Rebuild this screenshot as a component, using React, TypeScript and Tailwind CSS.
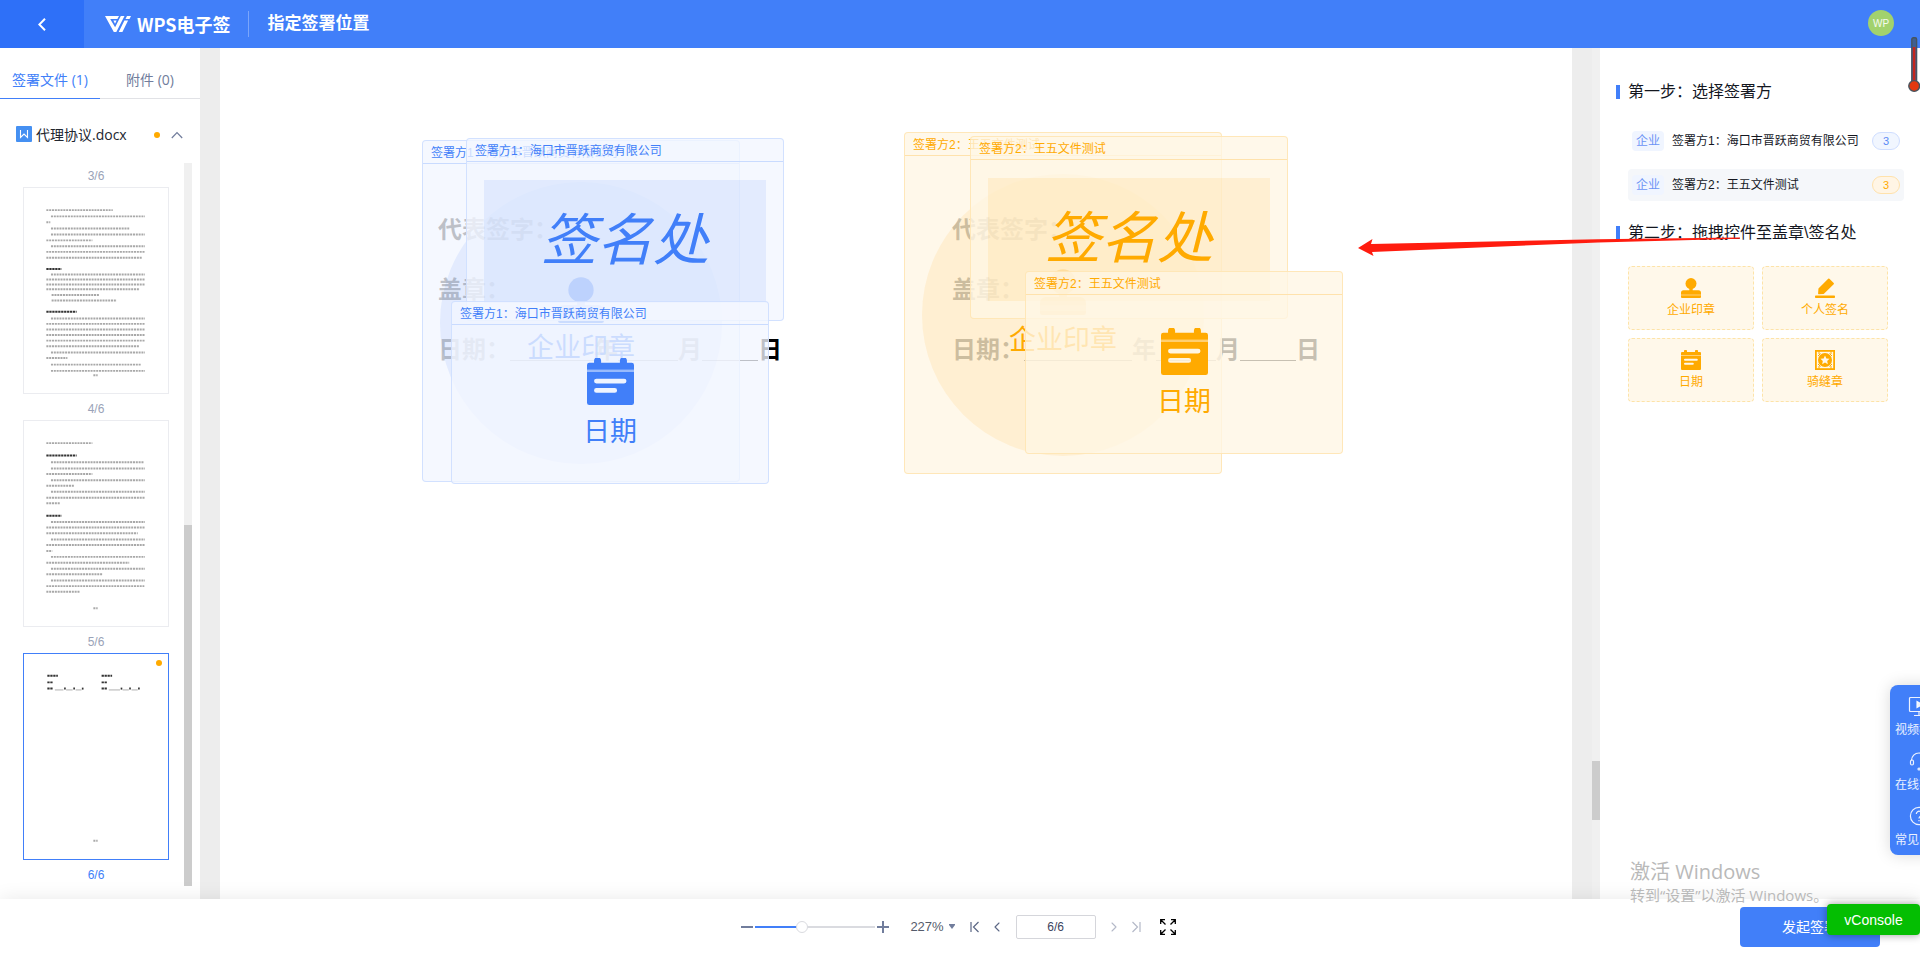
import type { ReactNode } from "react";
import { ChevronLeft, ChevronRight } from "lucide-react";

type Line = [number, number, number, boolean?];
type Tone = "blue" | "orange";

const HUMAN = "font-['Open_Sans','Noto_Sans_CJK_SC',sans-serif]";

const PAGE_THREE: Line[] = [
  [68, 270, 66], [82, 368, 85], [68, 80, 103], [82, 320, 122], [82, 368, 140], [68, 208, 158],
  [82, 368, 176], [68, 368, 193], [68, 360, 211], [68, 114, 245, true], [82, 368, 262], [68, 368, 277],
  [68, 368, 292], [68, 352, 307], [84, 230, 324], [84, 282, 341], [68, 160, 375, true], [82, 368, 396],
  [68, 368, 412], [68, 368, 429], [68, 368, 446], [68, 368, 463], [68, 350, 480], [82, 368, 499],
  [68, 132, 516], [82, 356, 536], [82, 368, 555], [211, 224, 568],
];
const PAGE_FOUR: Line[] = [
  [68, 208, 66], [68, 160, 104, true], [82, 364, 124], [82, 368, 143], [68, 208, 160], [82, 368, 179],
  [68, 154, 196], [82, 368, 214], [68, 368, 232], [68, 110, 249], [68, 114, 287, true], [82, 368, 306],
  [68, 368, 323], [68, 346, 340], [82, 368, 359], [68, 368, 376], [68, 86, 394], [82, 368, 412],
  [68, 320, 430], [82, 368, 448], [68, 238, 465], [82, 368, 484], [68, 366, 501], [68, 170, 518],
  [211, 224, 568],
];
const PAGE_FIVE: Line[] = [
  [71, 103, 65, true], [71, 88, 85, true], [71, 88, 104, true], [122, 127, 104, true], [150, 155, 104, true], [176, 181, 104, true],
  [236, 268, 65, true], [236, 253, 85, true], [236, 253, 104, true], [294, 299, 104, true], [320, 325, 104, true], [347, 352, 104, true],
  [211, 224, 567],
];
const RULES: Line[] = [
  [94, 120, 108], [128, 148, 108], [157, 175, 108], [258, 292, 108], [300, 319, 108], [327, 346, 108],
];

function PageSketch({ lines, rules = [] }: { lines: Line[]; rules?: Line[] }) {
  return (
    <svg viewBox="0 0 438 621" className="block h-full w-full" aria-hidden="true">
      {lines.map(([a, b, y, bold], i) => (
        <line key={i} x1={a} x2={b} y1={y} y2={y} stroke={bold ? "#333" : "#a8a8a8"} strokeWidth="6" strokeDasharray={bold ? "7 2" : "6.2 2.4"} />
      ))}
      {rules.map(([a, b, y], i) => (
        <line key={i} x1={a} x2={b} y1={y} y2={y} stroke="#888" strokeWidth="2" />
      ))}
    </svg>
  );
}

function StampIcon({ className }: { className: string }) {
  return (
    <svg viewBox="0 0 20 20" className={className} fill="currentColor" aria-hidden="true">
      <circle cx="10" cy="5.6" r="5.5" />
      <path d="M8.3 10h3.4v2.200h5.800a2.500 2.500 0 0 1 2.500 2.500V16H0v-1.300a2.500 2.500 0 0 1 2.500-2.500h5.800z" />
      <path d="M0 16h20v2H0z" opacity=".75" />
      <path d="M0 18h20v1a1 1 0 0 1-1 1H1a1 1 0 0 1-1-1z" />
    </svg>
  );
}

function DateIcon({ className }: { className: string }) {
  return (
    <svg viewBox="0 0 20 20" className={className} fill="currentColor" aria-hidden="true">
      <path d="M1 2h2V1.200a1.200 1.200 0 0 1 3 0V2h8V1.200a1.200 1.200 0 0 1 3 0V2h2a1 1 0 0 1 1 1v2H0V3a1 1 0 0 1 1-1z" />
      <path d="M0 5h20v1H0z" opacity=".5" />
      <path fillRule="evenodd" d="M0 6h20v13a1 1 0 0 1-1 1H1a1 1 0 0 1-1-1zM4 8.800a1 1 0 0 0 0 2h11.800a1 1 0 0 0 0-2zM4 12.800a1 1 0 0 0 0 2h7.800a1 1 0 0 0 0-2z" />
    </svg>
  );
}

function PenIcon({ className }: { className: string }) {
  return (
    <svg viewBox="0 0 20 20" className={className} fill="currentColor" aria-hidden="true">
      <path d="M13.200.8a.9.9 0 0 1 1.200 0l4.300 4.300a.9.9 0 0 1 0 1.200L9.200 15.600a1 1 0 0 1-.6.300l-4.700.3a.7.7 0 0 1-.8-.8l.3-4.400a1 1 0 0 1 .3-.7z" />
      <rect y="17.600" width="20" height="2.400" rx=".8" />
    </svg>
  );
}

function SeamIcon({ className }: { className: string }) {
  return (
    <svg viewBox="0 0 20 20" className={className} aria-hidden="true">
      <rect x=".9" y=".9" width="18.200" height="18.200" fill="none" stroke="currentColor" strokeWidth="1.800" />
      <path d="M4 1v3M4 16v3M16 1v3M16 16v3M5.500 3.500L3 6M14.500 3.500L17 6M5.500 16.500L3 14M14.500 16.500L17 14" stroke="currentColor" strokeWidth="1" />
      <circle cx="10" cy="10" r="7" fill="currentColor" />
      <path d="M10 5.500l1.350 2.900 3.150.4-2.300 2.200.6 3.150L10 12.600l-2.800 1.550.6-3.150-2.300-2.200 3.150-.4z" fill="#fff8ea" />
    </svg>
  );
}

function Card({ tone, title, place, children }: { tone: Tone; title: string; place: string; children: ReactNode }) {
  const blue = tone === "blue";
  return (
    <section
      className={`absolute flex w-[318px] flex-col rounded-[4px] border ${place} ${
        blue ? "border-[#c9dbff]/80 bg-[#f2f6ff]/78 text-[#417ff9]" : "border-[#ffe2ac]/80 bg-[#fff6e4]/78 text-[#ffaa00]"
      }`}
    >
      <h3 className={`h-[23px] border-b pl-2 text-xs leading-6 ${blue ? "border-[#c9dbff]" : "border-[#ffe2ac]"}`}>{title}</h3>
      <div className="flex flex-1 flex-col items-center justify-center">{children}</div>
    </section>
  );
}

function Signature({ tone }: { tone: Tone }) {
  return (
    <div
      className={`flex h-[123px] w-[282px] items-center justify-center text-[56px] leading-none italic ${
        tone === "blue" ? "bg-[#417ff9]/10" : "bg-[#ffaa00]/10"
      }`}
    >
      签名处
    </div>
  );
}

function Seal({ tone }: { tone: Tone }) {
  return (
    <div className={`flex size-[282px] flex-col items-center justify-center rounded-full ${tone === "blue" ? "bg-[#417ff9]/10" : "bg-[#ffaa00]/10"}`}>
      <StampIcon className="size-[46px]" />
      <span className="mt-1 text-[27px] leading-[42px]">企业印章</span>
    </div>
  );
}

function DateMark() {
  return (
    <>
      <DateIcon className="size-[47px]" />
      <span className="mt-2 text-[27px] leading-[38px]">日期</span>
    </>
  );
}

function SignColumn({ yearGap }: { yearGap: string }) {
  return (
    <div className="w-[514px] text-2xl leading-[60px] font-bold text-black">
      <p>代表签字：</p>
      <p>盖章：</p>
      <p className="flex items-center">
        日期：
        <i className={`mt-5 h-px bg-black ${yearGap}`} />年<i className="mt-5 h-px w-[60px] bg-black" />月
        <i className="mt-5 h-px w-[56px] bg-black" />日
      </p>
    </div>
  );
}

function Thumb({ label, active, children }: { label: string; active?: boolean; children: ReactNode }) {
  return (
    <>
      <button aria-label={`第${label[0]}页预览`} className={`relative block h-[207px] w-full border bg-white ${active ? "border-[#417ff9]" : "border-[#ebecf0]"}`}>
        {children}
        {active && <span className="absolute top-[6px] right-[6px] size-[6px] rounded-full bg-[#ffaa00]" />}
      </button>
      <p className={`h-[26px] text-center text-xs leading-[30px] ${active ? "text-[#417ff9]" : "text-[#9aa3b8]"}`}>{label}</p>
    </>
  );
}

function StepTitle({ children }: { children: string }) {
  return (
    <h2 className="flex items-center gap-2 text-base leading-6 text-[#14171f]">
      <span className="h-[14px] w-1 bg-[#417ff9]" />
      {children}
    </h2>
  );
}

const SIGNERS = [
  { name: "签署方1：海口市晋跃商贸有限公司", row: "", badge: "border-[#cfdeff] bg-[#f1f6ff] text-[#5a8af5]" },
  { name: "签署方2：王五文件测试", row: "bg-[#f5f7fa]", badge: "border-[#ffe2ac] bg-[#fff5e5] text-[#ffaa00]" },
];

const WIDGETS = [
  { label: "企业印章", Icon: StampIcon },
  { label: "个人签名", Icon: PenIcon },
  { label: "日期", Icon: DateIcon },
  { label: "骑缝章", Icon: SeamIcon },
];

export default function App() {
  return (
    <div className="relative flex h-screen flex-col overflow-hidden bg-white font-['Liberation_Sans','Noto_Sans_CJK_SC',sans-serif]">
      <header className="flex h-12 shrink-0 items-center bg-[#417ff9] text-white">
        <button aria-label="返回" className="flex h-full w-[84px] items-center justify-center bg-[#2e70f8]">
          <svg viewBox="0 0 8 13" className="h-[13px] w-2" fill="none" stroke="currentColor" strokeWidth="2" aria-hidden="true">
            <path d="M7 .8L1.300 6.500 7 12.200" />
          </svg>
        </button>
        <svg viewBox="0 0 26 16" className="ml-[21px] h-4 w-[26px]" fill="currentColor" aria-hidden="true">
          <path d="M0 0h14l-1.600 3H5.200l4.900 8.200L15.800 0h3.700l-8.200 16H8.800z" />
          <path d="M8.400 4.500h3.200L10 7.700z" />
          <path d="M19.400 4.500h3.700L17.400 16h-3.700zM22 0h4l-1.500 3h-4z" />
        </svg>
        <span className="ml-[6px] font-['Noto_Sans_CJK_SC',sans-serif] text-lg font-bold">WPS电子签</span>
        <span className="ml-[17px] h-[26px] w-px bg-white/30" />
        <h1 className="ml-[19px] text-[17px] font-bold">指定签署位置</h1>
        <span className="mr-[26px] mb-[2px] ml-auto flex size-[26px] items-center justify-center rounded-full bg-[#a2d26d] text-[10px] text-white/90">WP</span>
      </header>

      <div className="flex min-h-0 flex-1">
        <aside className="flex w-[200px] shrink-0 flex-col">
          <nav className={`flex h-[51px] shrink-0 pt-[13px] text-sm ${HUMAN}`}>
            <button className="flex-1 border-b border-[#417ff9] whitespace-nowrap text-[#417ff9]">签署文件 (1)</button>
            <button className="flex-1 border-b border-[#e1e2e6] whitespace-nowrap text-[#717d9c]">附件 (0)</button>
          </nav>
          <div className={`flex h-[62px] shrink-0 items-center pt-[10px] pr-[17px] pl-4 text-sm text-[#22262f] ${HUMAN}`}>
            <svg viewBox="0 0 16 16" className="mb-[2px] size-4" aria-hidden="true">
              <rect width="16" height="16" rx="1" fill="#4590f2" />
              <path d="M4.500 4V11.500L8 8 11.500 11.500V4" fill="none" stroke="#fff" strokeWidth="1.100" />
            </svg>
            <span className="ml-1">代理协议.docx</span>
            <span className="mr-[11px] ml-auto size-[6px] rounded-full bg-[#ffaa00]" />
            <svg viewBox="0 0 12 8" className="h-2 w-3" fill="none" stroke="#717d9c" strokeWidth="1.200" aria-hidden="true">
              <path d="M.8 7L6 1.500 11.200 7" />
            </svg>
          </div>
          <div className="flex min-h-0 flex-1">
            <div className="min-w-0 flex-1 overflow-hidden pr-[15px] pl-[23px]">
              <p className="h-[26px] text-center text-xs leading-[30px] text-[#9aa3b8]">3/6</p>
              <Thumb label="4/6"><PageSketch lines={PAGE_THREE} /></Thumb>
              <Thumb label="5/6"><PageSketch lines={PAGE_FOUR} /></Thumb>
              <Thumb label="6/6" active><PageSketch lines={PAGE_FIVE} rules={RULES} /></Thumb>
            </div>
            <div className="mt-[2px] mr-2 mb-[13px] flex w-2 flex-col justify-end bg-[#f0f0f0]">
              <span className="h-1/2 bg-[#ccc]" />
            </div>
          </div>
        </aside>

        <main className="flex min-w-0 flex-1 bg-[#ededed] pl-5">
          <div className="relative min-w-0 flex-1 overflow-hidden bg-white">
            <div className="flex pt-[152px] pl-[218px]">
              <SignColumn yearGap="w-[84px]" />
              <SignColumn yearGap="w-[108px]" />
            </div>
            <Card tone="blue" title="签署方1：海口市晋跃商贸有限公司" place="left-[202px] top-[92px] h-[342px]"><Seal tone="blue" /></Card>
            <Card tone="blue" title="签署方1：海口市晋跃商贸有限公司" place="left-[246px] top-[90px] h-[183px]"><Signature tone="blue" /></Card>
            <Card tone="blue" title="签署方1：海口市晋跃商贸有限公司" place="left-[231px] top-[253px] h-[183px]"><DateMark /></Card>
            <Card tone="orange" title="签署方2：王五文件测试" place="left-[684px] top-[84px] h-[342px]"><Seal tone="orange" /></Card>
            <Card tone="orange" title="签署方2：王五文件测试" place="left-[750px] top-[88px] h-[183px]"><Signature tone="orange" /></Card>
            <Card tone="orange" title="签署方2：王五文件测试" place="left-[805px] top-[223px] h-[183px]"><DateMark /></Card>
          </div>
          <div className="ml-5 flex w-2 flex-col justify-end bg-[#f0f0f0] pb-[79px]">
            <span className="h-[59px] bg-[#ccc]" />
          </div>
        </main>

        <aside className="w-[320px] shrink-0 pt-8 pl-4">
          <StepTitle>第一步：选择签署方</StepTitle>
          <ul className="mt-[21px] ml-3 flex w-[276px] flex-col gap-3">
            {SIGNERS.map((s) => (
              <li key={s.name} className={`flex h-8 items-center rounded-[4px] pr-1 pl-1 text-xs text-[#14171f] ${s.row}`}>
                <span className="flex h-5 w-8 items-center justify-center rounded-[4px] bg-[#f0f5ff] text-[#6c93f5]">企业</span>
                <span className="ml-2">{s.name}</span>
                <span className={`ml-auto flex h-[18px] w-7 items-center justify-center rounded-full border text-[11px] ${s.badge}`}>3</span>
              </li>
            ))}
          </ul>
          <div className="mt-5">
            <StepTitle>{"第二步：拖拽控件至盖章\\签名处"}</StepTitle>
          </div>
          <div className="mt-[21px] ml-3 grid w-[260px] grid-cols-2 gap-2">
            {WIDGETS.map(({ label, Icon }) => (
              <button key={label} className="flex h-16 flex-col items-center justify-center rounded-[4px] border border-dashed border-[#fde3a8] bg-[#fff8ea] text-xs text-[#ffaa00]">
                <Icon className="mt-[2px] size-5" />
                <span className="mt-[2px] leading-5">{label}</span>
              </button>
            ))}
          </div>
        </aside>
      </div>

      <footer className="relative grid h-[55px] shrink-0 grid-cols-[1fr_auto_1fr] items-center bg-white shadow-[0_0_20px_rgba(0,0,0,0.09)]">
        <div className="col-start-2 flex items-center text-[#5b6785]">
          <button aria-label="缩小" className="h-[2px] w-3 bg-[#717d9c]" />
          <input
            type="range"
            aria-label="缩放"
            defaultValue={38}
            className="mx-[2px] h-3 w-[120px] appearance-none bg-[linear-gradient(to_right,#417ff9_38%,#dadbe0_38%)] bg-[length:100%_2px] bg-center bg-no-repeat [&::-webkit-slider-thumb]:size-3 [&::-webkit-slider-thumb]:appearance-none [&::-webkit-slider-thumb]:rounded-full [&::-webkit-slider-thumb]:border [&::-webkit-slider-thumb]:border-[#dadbe0] [&::-webkit-slider-thumb]:bg-white"
          />
          <button aria-label="放大">
            <svg viewBox="0 0 12 12" className="size-3" stroke="#717d9c" strokeWidth="2" aria-hidden="true">
              <path d="M0 6h12M6 0v12" />
            </svg>
          </button>
          <button className="ml-[21px] flex items-center text-[13px] text-[#555b6b]">
            227%
            <svg viewBox="0 0 6 5" className="ml-[5px] h-[5px] w-[6px]" fill="#717d9c" aria-hidden="true">
              <path d="M0 0h6v1L3 5 0 1z" />
            </svg>
          </button>
          <button aria-label="首页" className="ml-[15px]">
            <svg viewBox="0 0 9 12" className="h-3 w-[9px]" fill="none" stroke="currentColor" strokeWidth="1.200" aria-hidden="true">
              <path d="M1 1v10M8.500 1L3.500 6l5 5" />
            </svg>
          </button>
          <button aria-label="上一页" className="ml-[14px]"><ChevronLeft className="-mx-1 size-4" strokeWidth={1.6} /></button>
          <input aria-label="页码" defaultValue="6/6" className="ml-[15px] h-6 w-20 rounded-[2px] border border-[#d5d6db] text-center text-xs text-[#3c4460]" />
          <button aria-label="下一页" className="ml-[14px] text-[#b4b9c8]"><ChevronRight className="-mx-1 size-4" strokeWidth={1.6} /></button>
          <button aria-label="末页" className="ml-[14px] text-[#b4b9c8]">
            <svg viewBox="0 0 9 12" className="h-3 w-[9px]" fill="none" stroke="currentColor" strokeWidth="1.200" aria-hidden="true">
              <path d="M8 1v10M.5 1l5 5-5 5" />
            </svg>
          </button>
          <button aria-label="全屏" className="mr-[3px] ml-[19px] text-black">
            <svg viewBox="0 0 16 16" className="size-4" fill="none" stroke="currentColor" strokeWidth="1.300" aria-hidden="true">
              <path d="M.7 5V.7H5M.7.7l4.800 4.800M11 .7h4.300V5M15.300.7l-4.800 4.800M.7 11v4.300H5M.7 15.300l4.800-4.800M11 15.300h4.300V11M15.300 15.300l-4.800-4.800" />
            </svg>
          </button>
        </div>
        <button className="mr-10 h-10 w-[140px] justify-self-end rounded-[4px] bg-[#417ff9] text-sm text-white">发起签署</button>
      </footer>

      <div className={`pointer-events-none absolute right-0 bottom-[50px] w-[290px] text-[#b9b9b9] ${HUMAN}`}>
        <p className="text-xl leading-7">激活 Windows</p>
        <p className="text-[15px] leading-[18px]">转到“设置”以激活 Windows。</p>
      </div>

      <nav className="absolute top-[685px] -right-7 flex h-[170px] w-[58px] flex-col rounded-lg bg-[#417ff9] pt-[10px] text-xs text-white/90 shadow-[0_0_16px_rgba(0,0,0,0.15)]">
        <a href="#video" className="flex h-[55px] shrink-0 flex-col items-center gap-[5px] whitespace-nowrap">
          <svg viewBox="0 0 22 22" className="size-[22px]" fill="none" stroke="currentColor" strokeWidth="1.200" aria-hidden="true">
            <rect x="1.500" y="2.500" width="19" height="14" rx="1" />
            <path d="M11 16.500V20M6 20.500h10" />
            <path d="M9 6.500v6l5-3z" fill="currentColor" />
          </svg>
          视频教程
        </a>
        <a href="#service" className="flex h-[55px] shrink-0 flex-col items-center gap-[5px] whitespace-nowrap">
          <svg viewBox="0 0 22 22" className="size-[22px]" fill="none" stroke="currentColor" strokeWidth="1.200" aria-hidden="true">
            <path d="M3.500 10.500a7.500 7.500 0 0 1 15 0M18.500 15c0 2-3 4-6 4" />
            <rect x="2.500" y="10" width="3" height="5" rx="1.500" />
            <rect x="16.500" y="10" width="3" height="5" rx="1.500" />
            <circle cx="11" cy="19" r="1" />
          </svg>
          在线客服
        </a>
        <a href="#faq" className="flex h-[55px] shrink-0 flex-col items-center gap-[5px] whitespace-nowrap">
          <svg viewBox="0 0 22 22" className="size-[22px]" fill="none" stroke="currentColor" strokeWidth="1.200" aria-hidden="true">
            <circle cx="11" cy="11" r="8.600" />
            <path d="M8.300 9a2.700 2.700 0 1 1 4.200 2.200c-1 .7-1.500 1.200-1.500 2.300M11 15v1.300" />
          </svg>
          常见问题
        </a>
      </nav>

      <button className="absolute right-0 bottom-[19px] h-[31px] w-[93px] rounded-[4px] bg-[#04be02] text-sm text-white shadow-[0_0_8px_rgba(0,0,0,0.4)]">vConsole</button>

      <svg viewBox="0 0 382 18" className="pointer-events-none absolute top-[239px] right-[180px] h-[18px] w-[382px] overflow-visible" aria-hidden="true">
        <path d="M0 9L14.500 0 13 5 240 .2 382-1.500 382-.3 240 3.400 14 13l1.500 4z" fill="#ff1c0f" />
      </svg>

      <svg viewBox="0 0 12 56" className="pointer-events-none absolute top-[37px] right-0 h-14 w-3" aria-hidden="true">
        <rect x="3.800" y=".8" width="4.800" height="46" rx="1.500" fill="#3f5f92" stroke="#46545f" strokeWidth="1.400" />
        <rect x="4.800" y="10" width="2.600" height="36" fill="#c4261c" />
        <circle cx="6.200" cy="49" r="5.400" fill="#e2380f" stroke="#46545f" strokeWidth="1.400" />
      </svg>
    </div>
  );
}
